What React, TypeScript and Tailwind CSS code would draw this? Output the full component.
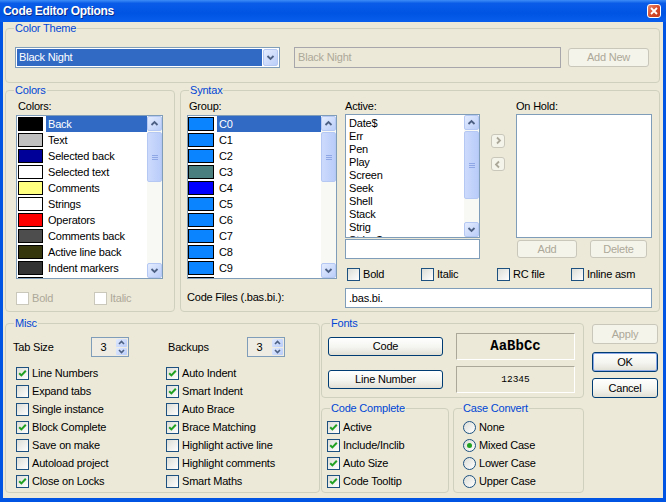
import React from "react";

type Kids = { children?: React.ReactNode; className?: string };

function Group({ title, className = "", children }: Kids & { title: string }) {
  return (
    <div className={`relative border border-[#D0D0BF] rounded-[4px] ${className}`}>
      <span className="absolute -top-[7px] left-[8px] bg-[#ECE9D8] px-[1px] leading-[13px] text-[#0046D5]">
        {title}
      </span>
      {children}
    </div>
  );
}

function Btn({
  label,
  disabled,
  def,
  className = "",
}: {
  label: React.ReactNode;
  disabled?: boolean;
  def?: boolean;
  className?: string;
}) {
  const look = disabled
    ? "border-[#C9C7BA] bg-[#F5F4EA] text-[#ACA899]"
    : "border-[#003C74] bg-[linear-gradient(to_bottom,#FFFFFF,#F4F4F0_55%,#E2E0D5)]";
  return (
    <div
      className={`flex items-center justify-center border rounded-[3px] ${look} ${
        def ? "shadow-[inset_0_0_0_1px_#8DA8E6]" : ""
      } ${className}`}
    >
      {label}
    </div>
  );
}

function Check({
  label,
  checked,
  disabled,
  className = "",
}: {
  label: string;
  checked?: boolean;
  disabled?: boolean;
  className?: string;
}) {
  return (
    <div className={`flex items-center gap-[3px] ${className}`}>
      <span
        className={`w-[13px] h-[13px] shrink-0 border flex items-center justify-center ${
          disabled
            ? "border-[#CAC8BB] bg-white"
            : "border-[#1C5180] bg-[linear-gradient(135deg,#DCDCD7,#FFFFFF)]"
        }`}
      >
        {checked && (
          <svg width="9" height="9" viewBox="0 0 9 9">
            <path d="M1.2 4.2L3.4 6.4L7.8 1.8" stroke="#21A121" strokeWidth="2" fill="none" />
          </svg>
        )}
      </span>
      <span className={disabled ? "text-[#ACA899]" : ""}>{label}</span>
    </div>
  );
}

function Radio({ label, checked }: { label: string; checked?: boolean }) {
  return (
    <div className="flex items-center gap-[3px] h-[18px]">
      <span className="w-[13px] h-[13px] rounded-full border border-[#1C5180] bg-[linear-gradient(135deg,#DCDCD7,#FFFFFF)] flex items-center justify-center">
        {checked && <span className="w-[5px] h-[5px] rounded-full bg-[#21A121]" />}
      </span>
      <span>{label}</span>
    </div>
  );
}

function Chevron({ up, color = "#4D6185" }: { up?: boolean; color?: string }) {
  return (
    <svg width="9" height="9" viewBox="0 0 9 9">
      <path
        d={up ? "M1.5 6L4.5 3L7.5 6" : "M1.5 3L4.5 6L7.5 3"}
        stroke={color}
        strokeWidth="1.8"
        fill="none"
      />
    </svg>
  );
}

function ScrollBtn({ up }: { up?: boolean }) {
  return (
    <div className="h-[15px] w-[15px] rounded-[2px] border border-[#B5C8F3] bg-[linear-gradient(135deg,#E4ECFE,#BBCEF9)] flex items-center justify-center">
      <Chevron up={up} />
    </div>
  );
}

function ScrollBar({ thumb, gap = 1 }: { thumb: number; gap?: number }) {
  return (
    <div className="w-[15px] h-full shrink-0 bg-[#F8F8F4] flex flex-col">
      <ScrollBtn up />
      <div
        className="rounded-[2px] border border-[#B5C8F3] bg-[linear-gradient(to_right,#CCDAFC,#B9CCF9)] flex flex-col items-center justify-center gap-[1px]"
        style={{ height: thumb, marginTop: gap }}
      >
        <span className="w-[6px] h-[1px] bg-[#8FA7E4]" />
        <span className="w-[6px] h-[1px] bg-[#8FA7E4]" />
        <span className="w-[6px] h-[1px] bg-[#8FA7E4]" />
      </div>
      <div className="flex-1" />
      <ScrollBtn />
    </div>
  );
}

const colorItems: [string, string][] = [
  ["Back", "#000000"],
  ["Text", "#C0C0C0"],
  ["Selected back", "#000099"],
  ["Selected text", "#FFFFFF"],
  ["Comments", "#FFFF80"],
  ["Strings", "#FFFFFF"],
  ["Operators", "#FF0000"],
  ["Comments back", "#4D4D4D"],
  ["Active line back", "#36360D"],
  ["Indent markers", "#333333"],
  ["", "#FFFFFF"],
];

const groupItems: [string, string][] = [
  ["C0", "#0A84FF"],
  ["C1", "#0A84FF"],
  ["C2", "#0A84FF"],
  ["C3", "#4A7F7F"],
  ["C4", "#0000FF"],
  ["C5", "#0A84FF"],
  ["C6", "#0A84FF"],
  ["C7", "#0A84FF"],
  ["C8", "#0A84FF"],
  ["C9", "#0A84FF"],
  ["", "#0A84FF"],
];

const activeItems = ["Date$", "Err", "Pen", "Play", "Screen", "Seek", "Shell", "Stack", "Strig", "String$"];

function SwatchList({
  items,
  sw,
  swMargin,
  className = "",
}: {
  items: [string, string][];
  sw: string;
  swMargin: string;
  className?: string;
}) {
  return (
    <div className={`border border-[#7F9DB9] bg-white flex overflow-hidden ${className}`}>
      <div className="flex-1 overflow-hidden">
        {items.map(([name, c], i) => (
          <div key={i} className="h-[16px] flex items-center">
            <span className={`${sw} ${swMargin} h-[14px] border border-black shrink-0`} style={{ background: c }} />
            <span
              className={`flex-1 ml-[3px] pl-[2px] h-[16px] leading-[16px] ${
                i === 0 ? "bg-[#316AC5] text-white" : ""
              }`}
            >
              {name}
            </span>
          </div>
        ))}
      </div>
      <ScrollBar thumb={50} />
    </div>
  );
}

function Spin({ value }: { value: string }) {
  return (
    <div className="w-[38px] h-[20px] border border-[#7F9DB9] bg-[#EFEDE3] flex items-center">
      <span className="flex-1 text-center">{value}</span>
      <div className="w-[13px] h-full flex flex-col p-[1px] gap-[1px]">
        <div className="flex-1 rounded-[1px] bg-[linear-gradient(135deg,#E0E9FE,#B9CCF9)] flex items-center justify-center">
          <svg width="7" height="5" viewBox="0 0 7 5">
            <path d="M1 4L3.5 1.5L6 4" stroke="#4D6185" strokeWidth="1.6" fill="none" />
          </svg>
        </div>
        <div className="flex-1 rounded-[1px] bg-[linear-gradient(135deg,#E0E9FE,#B9CCF9)] flex items-center justify-center">
          <svg width="7" height="5" viewBox="0 0 7 5">
            <path d="M1 1L3.5 3.5L6 1" stroke="#4D6185" strokeWidth="1.6" fill="none" />
          </svg>
        </div>
      </div>
    </div>
  );
}

function TitleBar() {
  return (
    <div className="h-[22px] shrink-0 flex items-center pl-[3px] pr-[5px] bg-[linear-gradient(to_bottom,#3D8EF7,#0A5CE8_15%,#0054E3_60%,#0A5EEC)]">
      <span className="text-white font-bold text-[12px] tracking-[-0.3px] [text-shadow:1px_1px_0_#0A2A8A]">
        Code Editor Options
      </span>
      <div className="ml-auto w-[14px] h-[14px] rounded-[3px] border border-white bg-[linear-gradient(135deg,#EB8A6B,#D5492A_55%,#C23A1C)] flex items-center justify-center">
        <svg width="8" height="8" viewBox="0 0 8 8">
          <path d="M1 1L7 7M7 1L1 7" stroke="white" strokeWidth="1.8" />
        </svg>
      </div>
    </div>
  );
}

export default function App() {
  return (
    <div className="w-[666px] h-[502px] flex flex-col bg-[#0054E3] font-['Liberation_Sans',Arial,sans-serif] text-[11px] leading-[13px] tracking-[-0.2px] text-black overflow-hidden">
      <TitleBar />
      <div className="flex-1 mx-[3px] mb-[4px] bg-[#ECE9D8] flex flex-col pl-[2px] pt-[6px]">
        {/* Color Theme */}
        <Group title="Color Theme" className="w-[655px] h-[55px] shrink-0">
          <div className="flex items-start pt-[18px] pl-[9px]">
            <div className="w-[265px] h-[21px] border border-[#7F9DB9] bg-white p-[1px] flex">
              <span className="flex-1 bg-[#316AC5] text-white pl-[2px] leading-[17px]">Black Night</span>
              <div className="w-[15px] ml-[1px] h-full rounded-[2px] border border-[#B5C8F3] bg-[linear-gradient(135deg,#E4ECFE,#BBCEF9)] flex items-center justify-center">
                <Chevron />
              </div>
            </div>
            <div className="ml-[14px] w-[267px] h-[21px] border border-[#A7A6AA] bg-[#ECE9D8] text-[#ACA899] pl-[3px] leading-[19px]">
              Black Night
            </div>
            <Btn label="Add New" disabled className="ml-[7px] mt-[1px] w-[81px] h-[19px]" />
          </div>
        </Group>

        <div className="flex gap-[5px] mt-[7px] shrink-0">
          {/* Colors */}
          <Group title="Colors" className="w-[170px] h-[222px]">
            <div className="flex flex-col pt-[9px]">
              <span className="ml-[12px]">Colors:</span>
              <SwatchList items={colorItems} sw="w-[25px]" swMargin="ml-[1px]" className="ml-[10px] mt-[2px] w-[147px] h-[164px]" />
              <div className="flex mt-[10px] h-[18px] pl-[10px]">
                <Check label="Bold" disabled className="w-[78px]" />
                <Check label="Italic" disabled />
              </div>
            </div>
          </Group>

          {/* Syntax */}
          <Group title="Syntax" className="w-[480px] h-[222px]">
            <div className="flex pt-[9px] pl-[6px]">
              <div className="w-[150px] flex flex-col">
                <span className="ml-[2px]">Group:</span>
                <SwatchList items={groupItems} sw="w-[26px]" swMargin="ml-0" className="mt-[2px] w-[150px] h-[164px]" />
                <span className="mt-[12px]">Code Files (.bas.bi.):</span>
              </div>
              <div className="ml-[8px] w-[307px] flex flex-col">
                <div className="flex">
                  <div className="w-[135px] flex flex-col">
                    <span>Active:</span>
                    <div className="mt-[1px] h-[124px] border border-[#7F9DB9] bg-white flex overflow-hidden">
                      <div className="flex-1 pt-[2px] pl-[3px] overflow-hidden">
                        {activeItems.map((a) => (
                          <div key={a} className="h-[13px] leading-[13px]">
                            {a}
                          </div>
                        ))}
                      </div>
                      <ScrollBar thumb={68} />
                    </div>
                    <div className="mt-[1px] h-[20px] border border-[#7F9DB9] bg-white" />
                  </div>
                  <div className="ml-[11px] w-[14px] flex flex-col pt-[34px]">
                    <Btn label={<Chevron up={false} color="#ACA899" />} disabled className="h-[14px] rotate-[-90deg]" />
                    <Btn label={<Chevron up={false} color="#ACA899" />} disabled className="h-[14px] mt-[9px] rotate-90" />
                  </div>
                  <div className="ml-[11px] w-[136px] flex flex-col">
                    <span>On Hold:</span>
                    <div className="mt-[1px] h-[124px] border border-[#7F9DB9] bg-white" />
                    <div className="flex mt-[2px]">
                      <Btn label="Add" disabled className="ml-[1px] w-[60px] h-[18px]" />
                      <Btn label="Delete" disabled className="ml-[13px] w-[57px] h-[18px]" />
                    </div>
                  </div>
                </div>
                <div className="flex mt-[8px] h-[15px] pl-[2px]">
                  <Check label="Bold" className="w-[74px]" />
                  <Check label="Italic" className="w-[76px]" />
                  <Check label="RC file" className="w-[74px]" />
                  <Check label="Inline asm" />
                </div>
                <div className="mt-[6px] h-[20px] border border-[#7F9DB9] bg-white pl-[3px] leading-[18px]">.bas.bi.</div>
              </div>
            </div>
          </Group>
        </div>

        <div className="flex mt-[11px] shrink-0">
          {/* Misc */}
          <Group title="Misc" className="w-[315px] h-[170px]">
            <div className="flex flex-col pt-[13px]">
              <div className="flex items-center h-[20px]">
                <span className="ml-[7px] w-[78px]">Tab Size</span>
                <Spin value="3" />
                <span className="ml-[39px] w-[79px]">Backups</span>
                <Spin value="3" />
              </div>
              <div className="mt-[7px] pl-[10px] grid grid-cols-[150px_1fr] grid-flow-col grid-rows-7">
                <Check label="Line Numbers" checked className="h-[18px]" />
                <Check label="Expand tabs" className="h-[18px]" />
                <Check label="Single instance" className="h-[18px]" />
                <Check label="Block Complete" checked className="h-[18px]" />
                <Check label="Save on make" className="h-[18px]" />
                <Check label="Autoload project" className="h-[18px]" />
                <Check label="Close on Locks" checked className="h-[18px]" />
                <Check label="Auto Indent" checked className="h-[18px]" />
                <Check label="Smart Indent" checked className="h-[18px]" />
                <Check label="Auto Brace" className="h-[18px]" />
                <Check label="Brace Matching" checked className="h-[18px]" />
                <Check label="Highlight active line" className="h-[18px]" />
                <Check label="Highlight comments" className="h-[18px]" />
                <Check label="Smart Maths" className="h-[18px]" />
              </div>
            </div>
          </Group>

          <div className="ml-[1px] w-[263px] flex flex-col">
            <Group title="Fonts" className="h-[75px]">
              <div className="flex flex-col pt-[9px] pl-[6px]">
                <div className="flex items-center">
                  <Btn label="Code" className="w-[115px] h-[19px]" />
                  <div className="ml-[13px] w-[119px] h-[27px] border border-t-[#ACA899] border-l-[#ACA899] border-r-white border-b-white flex items-center justify-center font-['Liberation_Mono',monospace] font-bold text-[14px] tracking-normal">
                    AaBbCc
                  </div>
                </div>
                <div className="flex items-center mt-[6px]">
                  <Btn label="Line Number" className="w-[115px] h-[19px]" />
                  <div className="ml-[13px] w-[119px] h-[27px] border border-t-[#ACA899] border-l-[#ACA899] border-r-white border-b-white flex items-center justify-center font-['Liberation_Mono',monospace] text-[9.5px] tracking-normal">
                    12345
                  </div>
                </div>
              </div>
            </Group>
            <div className="flex gap-[4px] mt-[10px]">
              <Group title="Code Complete" className="w-[128px] h-[85px]">
                <div className="flex flex-col pt-[9px] pl-[5px]">
                  <Check label="Active" checked className="h-[18px]" />
                  <Check label="Include/Inclib" checked className="h-[18px]" />
                  <Check label="Auto Size" checked className="h-[18px]" />
                  <Check label="Code Tooltip" checked className="h-[18px]" />
                </div>
              </Group>
              <Group title="Case Convert" className="w-[131px] h-[85px]">
                <div className="flex flex-col pt-[9px] pl-[9px]">
                  <Radio label="None" />
                  <Radio label="Mixed Case" checked />
                  <Radio label="Lower Case" />
                  <Radio label="Upper Case" />
                </div>
              </Group>
            </div>
          </div>

          <div className="ml-[8px] w-[66px] flex flex-col pt-[1px]">
            <Btn label="Apply" disabled className="h-[20px]" />
            <Btn label="OK" def className="h-[20px] mt-[8px]" />
            <Btn label="Cancel" className="h-[20px] mt-[6px]" />
          </div>
        </div>
      </div>
    </div>
  );
}
